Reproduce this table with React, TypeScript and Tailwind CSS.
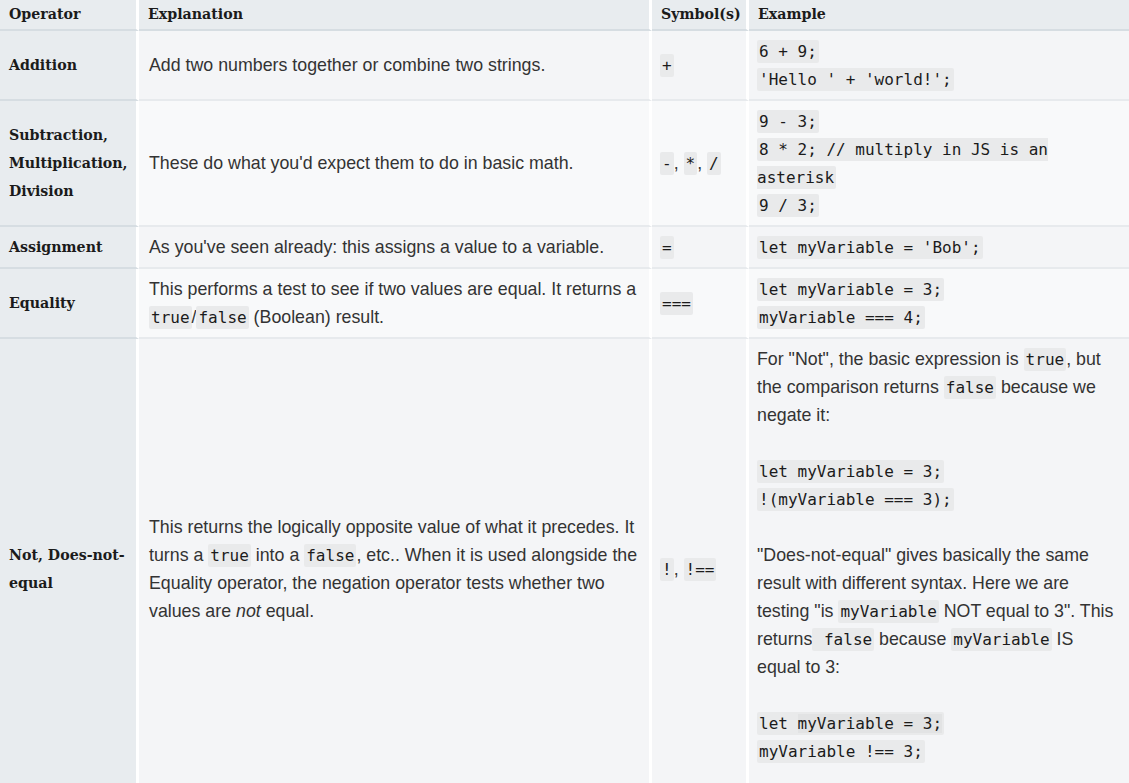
import type { ReactNode } from 'react';

const SLAB = "font-['DejaVu_Serif',serif] font-bold text-[14.2px]";

function C({ children }: { children: ReactNode }) {
  return (
    <code className="rounded-[2px] bg-[#e9eaeb] px-[2px] py-[2px] font-['DejaVu_Sans_Mono',monospace] text-[16px] leading-[0] text-[#1b1b1b]">
      {children}
    </code>
  );
}

function Th({ children, last }: { children: ReactNode; last?: boolean }) {
  return (
    <th
      className={`bg-[#e8ecef] px-[9px] py-[5px] text-left align-middle leading-[19px] text-[#1b1b1b] ${SLAB} border-b-2 border-b-[#d6dde2] ${last ? '' : 'border-r-[3px] border-r-white'}`}
    >
      {children}
    </th>
  );
}

type Row = {
  op: ReactNode;
  explain: ReactNode;
  symbol: ReactNode;
  example: ReactNode;
};

const ROWS: Row[] = [
  {
    op: 'Addition',
    explain: 'Add two numbers together or combine two strings.',
    symbol: <C>+</C>,
    example: (
      <>
        <C>6 + 9;</C>
        <br />
        <C>'Hello ' + 'world!';</C>
      </>
    ),
  },
  {
    op: 'Subtraction, Multiplication, Division',
    explain: "These do what you'd expect them to do in basic math.",
    symbol: (
      <>
        <C>-</C>, <C>*</C>, <C>/</C>
      </>
    ),
    example: (
      <>
        <C>9 - 3;</C>
        <br />
        <C>8 * 2; // multiply in JS is an asterisk</C>
        <br />
        <C>9 / 3;</C>
      </>
    ),
  },
  {
    op: 'Assignment',
    explain: "As you've seen already: this assigns a value to a variable.",
    symbol: <C>=</C>,
    example: <C>let myVariable = 'Bob';</C>,
  },
  {
    op: 'Equality',
    explain: (
      <>
        This performs a test to see if two values are equal. It returns a <C>true</C>/<C>false</C> (Boolean) result.
      </>
    ),
    symbol: <C>===</C>,
    example: (
      <>
        <C>let myVariable = 3;</C>
        <br />
        <C>myVariable === 4;</C>
      </>
    ),
  },
  {
    op: 'Not, Does-not-equal',
    explain: (
      <>
        This returns the logically opposite value of what it precedes. It turns a <C>true</C> into a <C>false</C>,
        etc.. When it is used alongside the Equality operator, the negation operator tests whether two values are{' '}
        <em>not</em> equal.
      </>
    ),
    symbol: (
      <>
        <C>!</C>, <C>!==</C>
      </>
    ),
    example: (
      <>
        <p className="mb-[28px]">
          For "Not", the basic expression is <C>true</C>, but the comparison returns <C>false</C> because we negate it:
        </p>
        <p className="mb-[28px]">
          <C>let myVariable = 3;</C>
          <br />
          <C>!(myVariable === 3);</C>
        </p>
        <p className="mb-[28px]">
          "Does-not-equal" gives basically the same result with different syntax. Here we are testing "is{' '}
          <C>myVariable</C> NOT equal to 3". This returns<C> false</C> because <C>myVariable</C> IS equal to 3:
        </p>
        <p className="mb-[28px]">
          <C>
            let <span className="bg-[#e2e3e4]">myVariable = 3;</span>
          </C>
          <br />
          <C>myVariable !== 3;</C>
        </p>
      </>
    ),
  },
];

export default function App() {
  return (
    <div className="min-h-[783px] w-[1129px] overflow-hidden bg-white font-['Liberation_Sans',Arial,sans-serif] text-[17.8px] leading-[28px] text-[#333]">
      <table className="w-full table-fixed border-separate border-spacing-0">
        <colgroup>
          <col className="w-[139px]" />
          <col className="w-[513px]" />
          <col className="w-[97px]" />
          <col className="w-[380px]" />
        </colgroup>
        <thead>
          <tr>
            <Th>Operator</Th>
            <Th>Explanation</Th>
            <Th>Symbol(s)</Th>
            <Th last>Example</Th>
          </tr>
        </thead>
        <tbody>
          {ROWS.map((r, i) => {
            const bg = i % 2 === 0 ? 'bg-[#f4f5f7]' : 'bg-[#f8f9fa]';
            const cell = `${bg} border-b-2 border-b-[#e7eaed] px-[8px] py-[6px] align-middle`;
            return (
              <tr key={i}>
                <th
                  className={`bg-[#e8ecef] border-b-2 border-b-[#d6dde2] border-r-[3px] border-r-white px-[9px] py-[6px] text-left align-middle leading-[28px] text-[#1b1b1b] ${SLAB}`}
                >
                  {r.op}
                </th>
                <td className={`${cell} border-r-[3px] border-r-white pl-[10px]`}>{r.explain}</td>
                <td className={`${cell} border-r-[3px] border-r-white`}>{r.symbol}</td>
                <td className={`${cell} pr-[8px]`}>{r.example}</td>
              </tr>
            );
          })}
        </tbody>
      </table>
    </div>
  );
}
